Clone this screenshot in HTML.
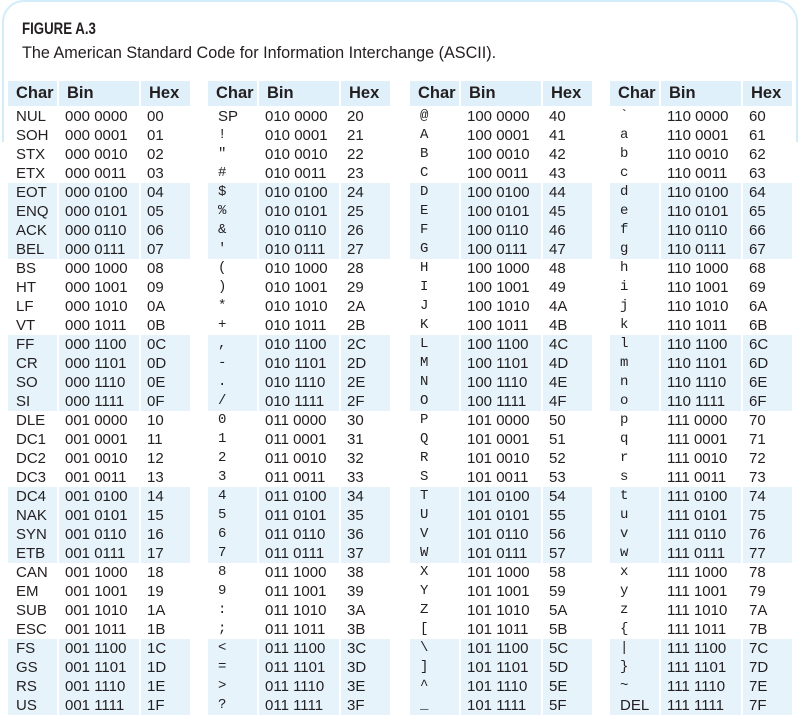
<!DOCTYPE html>
<html><head><meta charset="utf-8"><style>
body{margin:0;width:800px;height:714px;overflow:hidden;background:#fff;font-family:"Liberation Sans",sans-serif;color:#231f20;position:relative}
.box{position:absolute;left:2px;top:0;width:792px;height:140px;border:2px solid #d3ecfa;border-bottom:none;border-radius:22px 22px 0 0}
.fig{position:absolute;left:22px;top:19px;font-weight:bold;font-size:17px;transform:scaleX(0.78);transform-origin:0 0}
.cap{position:absolute;left:22px;top:44px;font-size:16.2px}
table{position:absolute;top:81px;border-collapse:separate;border-spacing:2px 0;font-size:15px;background:#fff}
td,th{padding:0;height:19px;line-height:19px;white-space:nowrap;text-align:left}
th{height:25px;line-height:25px;background:#dff0fa;font-weight:bold;font-size:16.5px;padding-left:8px;border-bottom:1px solid #fff}
td.c{padding-left:8px;width:41px}
td.b{padding-left:6px;width:74px}
td.h{padding-left:6px;width:43px}
tr.s td{background:#e6f3fb}
.m td.c{font-family:"Liberation Mono",monospace;font-size:14px;padding-left:10px;width:39px}
.m td.c.t{font-family:"Liberation Sans",sans-serif;font-size:15px}
</style></head><body>
<div class="box"></div>
<div class="fig">FIGURE A.3</div>
<div class="cap">The American Standard Code for Information Interchange (ASCII).</div>

<table style="left:6px"><tr><th style="width:41px">Char</th><th style="width:72px">Bin</th><th style="width:41px">Hex</th></tr>
<tr><td class="c">NUL</td><td class="b">000 0000</td><td class="h">00</td></tr>
<tr><td class="c">SOH</td><td class="b">000 0001</td><td class="h">01</td></tr>
<tr><td class="c">STX</td><td class="b">000 0010</td><td class="h">02</td></tr>
<tr><td class="c">ETX</td><td class="b">000 0011</td><td class="h">03</td></tr>
<tr class="s"><td class="c">EOT</td><td class="b">000 0100</td><td class="h">04</td></tr>
<tr class="s"><td class="c">ENQ</td><td class="b">000 0101</td><td class="h">05</td></tr>
<tr class="s"><td class="c">ACK</td><td class="b">000 0110</td><td class="h">06</td></tr>
<tr class="s"><td class="c">BEL</td><td class="b">000 0111</td><td class="h">07</td></tr>
<tr><td class="c">BS</td><td class="b">000 1000</td><td class="h">08</td></tr>
<tr><td class="c">HT</td><td class="b">000 1001</td><td class="h">09</td></tr>
<tr><td class="c">LF</td><td class="b">000 1010</td><td class="h">0A</td></tr>
<tr><td class="c">VT</td><td class="b">000 1011</td><td class="h">0B</td></tr>
<tr class="s"><td class="c">FF</td><td class="b">000 1100</td><td class="h">0C</td></tr>
<tr class="s"><td class="c">CR</td><td class="b">000 1101</td><td class="h">0D</td></tr>
<tr class="s"><td class="c">SO</td><td class="b">000 1110</td><td class="h">0E</td></tr>
<tr class="s"><td class="c">SI</td><td class="b">000 1111</td><td class="h">0F</td></tr>
<tr><td class="c">DLE</td><td class="b">001 0000</td><td class="h">10</td></tr>
<tr><td class="c">DC1</td><td class="b">001 0001</td><td class="h">11</td></tr>
<tr><td class="c">DC2</td><td class="b">001 0010</td><td class="h">12</td></tr>
<tr><td class="c">DC3</td><td class="b">001 0011</td><td class="h">13</td></tr>
<tr class="s"><td class="c">DC4</td><td class="b">001 0100</td><td class="h">14</td></tr>
<tr class="s"><td class="c">NAK</td><td class="b">001 0101</td><td class="h">15</td></tr>
<tr class="s"><td class="c">SYN</td><td class="b">001 0110</td><td class="h">16</td></tr>
<tr class="s"><td class="c">ETB</td><td class="b">001 0111</td><td class="h">17</td></tr>
<tr><td class="c">CAN</td><td class="b">001 1000</td><td class="h">18</td></tr>
<tr><td class="c">EM</td><td class="b">001 1001</td><td class="h">19</td></tr>
<tr><td class="c">SUB</td><td class="b">001 1010</td><td class="h">1A</td></tr>
<tr><td class="c">ESC</td><td class="b">001 1011</td><td class="h">1B</td></tr>
<tr class="s"><td class="c">FS</td><td class="b">001 1100</td><td class="h">1C</td></tr>
<tr class="s"><td class="c">GS</td><td class="b">001 1101</td><td class="h">1D</td></tr>
<tr class="s"><td class="c">RS</td><td class="b">001 1110</td><td class="h">1E</td></tr>
<tr class="s"><td class="c">US</td><td class="b">001 1111</td><td class="h">1F</td></tr>
</table>

<table class="m" style="left:206px"><tr><th style="width:41px">Char</th><th style="width:72px">Bin</th><th style="width:41px">Hex</th></tr>
<tr><td class="c t">SP</td><td class="b">010 0000</td><td class="h">20</td></tr>
<tr><td class="c">!</td><td class="b">010 0001</td><td class="h">21</td></tr>
<tr><td class="c">"</td><td class="b">010 0010</td><td class="h">22</td></tr>
<tr><td class="c">#</td><td class="b">010 0011</td><td class="h">23</td></tr>
<tr class="s"><td class="c">$</td><td class="b">010 0100</td><td class="h">24</td></tr>
<tr class="s"><td class="c">%</td><td class="b">010 0101</td><td class="h">25</td></tr>
<tr class="s"><td class="c">&amp;</td><td class="b">010 0110</td><td class="h">26</td></tr>
<tr class="s"><td class="c">'</td><td class="b">010 0111</td><td class="h">27</td></tr>
<tr><td class="c">(</td><td class="b">010 1000</td><td class="h">28</td></tr>
<tr><td class="c">)</td><td class="b">010 1001</td><td class="h">29</td></tr>
<tr><td class="c">*</td><td class="b">010 1010</td><td class="h">2A</td></tr>
<tr><td class="c">+</td><td class="b">010 1011</td><td class="h">2B</td></tr>
<tr class="s"><td class="c">,</td><td class="b">010 1100</td><td class="h">2C</td></tr>
<tr class="s"><td class="c">-</td><td class="b">010 1101</td><td class="h">2D</td></tr>
<tr class="s"><td class="c">.</td><td class="b">010 1110</td><td class="h">2E</td></tr>
<tr class="s"><td class="c">/</td><td class="b">010 1111</td><td class="h">2F</td></tr>
<tr><td class="c">0</td><td class="b">011 0000</td><td class="h">30</td></tr>
<tr><td class="c">1</td><td class="b">011 0001</td><td class="h">31</td></tr>
<tr><td class="c">2</td><td class="b">011 0010</td><td class="h">32</td></tr>
<tr><td class="c">3</td><td class="b">011 0011</td><td class="h">33</td></tr>
<tr class="s"><td class="c">4</td><td class="b">011 0100</td><td class="h">34</td></tr>
<tr class="s"><td class="c">5</td><td class="b">011 0101</td><td class="h">35</td></tr>
<tr class="s"><td class="c">6</td><td class="b">011 0110</td><td class="h">36</td></tr>
<tr class="s"><td class="c">7</td><td class="b">011 0111</td><td class="h">37</td></tr>
<tr><td class="c">8</td><td class="b">011 1000</td><td class="h">38</td></tr>
<tr><td class="c">9</td><td class="b">011 1001</td><td class="h">39</td></tr>
<tr><td class="c">:</td><td class="b">011 1010</td><td class="h">3A</td></tr>
<tr><td class="c">;</td><td class="b">011 1011</td><td class="h">3B</td></tr>
<tr class="s"><td class="c">&lt;</td><td class="b">011 1100</td><td class="h">3C</td></tr>
<tr class="s"><td class="c">=</td><td class="b">011 1101</td><td class="h">3D</td></tr>
<tr class="s"><td class="c">&gt;</td><td class="b">011 1110</td><td class="h">3E</td></tr>
<tr class="s"><td class="c">?</td><td class="b">011 1111</td><td class="h">3F</td></tr>
</table>

<table class="m" style="left:408px"><tr><th style="width:41px">Char</th><th style="width:72px">Bin</th><th style="width:41px">Hex</th></tr>
<tr><td class="c">@</td><td class="b">100 0000</td><td class="h">40</td></tr>
<tr><td class="c">A</td><td class="b">100 0001</td><td class="h">41</td></tr>
<tr><td class="c">B</td><td class="b">100 0010</td><td class="h">42</td></tr>
<tr><td class="c">C</td><td class="b">100 0011</td><td class="h">43</td></tr>
<tr class="s"><td class="c">D</td><td class="b">100 0100</td><td class="h">44</td></tr>
<tr class="s"><td class="c">E</td><td class="b">100 0101</td><td class="h">45</td></tr>
<tr class="s"><td class="c">F</td><td class="b">100 0110</td><td class="h">46</td></tr>
<tr class="s"><td class="c">G</td><td class="b">100 0111</td><td class="h">47</td></tr>
<tr><td class="c">H</td><td class="b">100 1000</td><td class="h">48</td></tr>
<tr><td class="c">I</td><td class="b">100 1001</td><td class="h">49</td></tr>
<tr><td class="c">J</td><td class="b">100 1010</td><td class="h">4A</td></tr>
<tr><td class="c">K</td><td class="b">100 1011</td><td class="h">4B</td></tr>
<tr class="s"><td class="c">L</td><td class="b">100 1100</td><td class="h">4C</td></tr>
<tr class="s"><td class="c">M</td><td class="b">100 1101</td><td class="h">4D</td></tr>
<tr class="s"><td class="c">N</td><td class="b">100 1110</td><td class="h">4E</td></tr>
<tr class="s"><td class="c">O</td><td class="b">100 1111</td><td class="h">4F</td></tr>
<tr><td class="c">P</td><td class="b">101 0000</td><td class="h">50</td></tr>
<tr><td class="c">Q</td><td class="b">101 0001</td><td class="h">51</td></tr>
<tr><td class="c">R</td><td class="b">101 0010</td><td class="h">52</td></tr>
<tr><td class="c">S</td><td class="b">101 0011</td><td class="h">53</td></tr>
<tr class="s"><td class="c">T</td><td class="b">101 0100</td><td class="h">54</td></tr>
<tr class="s"><td class="c">U</td><td class="b">101 0101</td><td class="h">55</td></tr>
<tr class="s"><td class="c">V</td><td class="b">101 0110</td><td class="h">56</td></tr>
<tr class="s"><td class="c">W</td><td class="b">101 0111</td><td class="h">57</td></tr>
<tr><td class="c">X</td><td class="b">101 1000</td><td class="h">58</td></tr>
<tr><td class="c">Y</td><td class="b">101 1001</td><td class="h">59</td></tr>
<tr><td class="c">Z</td><td class="b">101 1010</td><td class="h">5A</td></tr>
<tr><td class="c">[</td><td class="b">101 1011</td><td class="h">5B</td></tr>
<tr class="s"><td class="c">\</td><td class="b">101 1100</td><td class="h">5C</td></tr>
<tr class="s"><td class="c">]</td><td class="b">101 1101</td><td class="h">5D</td></tr>
<tr class="s"><td class="c">^</td><td class="b">101 1110</td><td class="h">5E</td></tr>
<tr class="s"><td class="c">_</td><td class="b">101 1111</td><td class="h">5F</td></tr>
</table>

<table class="m" style="left:608px"><tr><th style="width:41px">Char</th><th style="width:72px">Bin</th><th style="width:41px">Hex</th></tr>
<tr><td class="c">`</td><td class="b">110 0000</td><td class="h">60</td></tr>
<tr><td class="c">a</td><td class="b">110 0001</td><td class="h">61</td></tr>
<tr><td class="c">b</td><td class="b">110 0010</td><td class="h">62</td></tr>
<tr><td class="c">c</td><td class="b">110 0011</td><td class="h">63</td></tr>
<tr class="s"><td class="c">d</td><td class="b">110 0100</td><td class="h">64</td></tr>
<tr class="s"><td class="c">e</td><td class="b">110 0101</td><td class="h">65</td></tr>
<tr class="s"><td class="c">f</td><td class="b">110 0110</td><td class="h">66</td></tr>
<tr class="s"><td class="c">g</td><td class="b">110 0111</td><td class="h">67</td></tr>
<tr><td class="c">h</td><td class="b">110 1000</td><td class="h">68</td></tr>
<tr><td class="c">i</td><td class="b">110 1001</td><td class="h">69</td></tr>
<tr><td class="c">j</td><td class="b">110 1010</td><td class="h">6A</td></tr>
<tr><td class="c">k</td><td class="b">110 1011</td><td class="h">6B</td></tr>
<tr class="s"><td class="c">l</td><td class="b">110 1100</td><td class="h">6C</td></tr>
<tr class="s"><td class="c">m</td><td class="b">110 1101</td><td class="h">6D</td></tr>
<tr class="s"><td class="c">n</td><td class="b">110 1110</td><td class="h">6E</td></tr>
<tr class="s"><td class="c">o</td><td class="b">110 1111</td><td class="h">6F</td></tr>
<tr><td class="c">p</td><td class="b">111 0000</td><td class="h">70</td></tr>
<tr><td class="c">q</td><td class="b">111 0001</td><td class="h">71</td></tr>
<tr><td class="c">r</td><td class="b">111 0010</td><td class="h">72</td></tr>
<tr><td class="c">s</td><td class="b">111 0011</td><td class="h">73</td></tr>
<tr class="s"><td class="c">t</td><td class="b">111 0100</td><td class="h">74</td></tr>
<tr class="s"><td class="c">u</td><td class="b">111 0101</td><td class="h">75</td></tr>
<tr class="s"><td class="c">v</td><td class="b">111 0110</td><td class="h">76</td></tr>
<tr class="s"><td class="c">w</td><td class="b">111 0111</td><td class="h">77</td></tr>
<tr><td class="c">x</td><td class="b">111 1000</td><td class="h">78</td></tr>
<tr><td class="c">y</td><td class="b">111 1001</td><td class="h">79</td></tr>
<tr><td class="c">z</td><td class="b">111 1010</td><td class="h">7A</td></tr>
<tr><td class="c">{</td><td class="b">111 1011</td><td class="h">7B</td></tr>
<tr class="s"><td class="c">|</td><td class="b">111 1100</td><td class="h">7C</td></tr>
<tr class="s"><td class="c">}</td><td class="b">111 1101</td><td class="h">7D</td></tr>
<tr class="s"><td class="c">~</td><td class="b">111 1110</td><td class="h">7E</td></tr>
<tr class="s"><td class="c t">DEL</td><td class="b">111 1111</td><td class="h">7F</td></tr>
</table>
</body></html>
